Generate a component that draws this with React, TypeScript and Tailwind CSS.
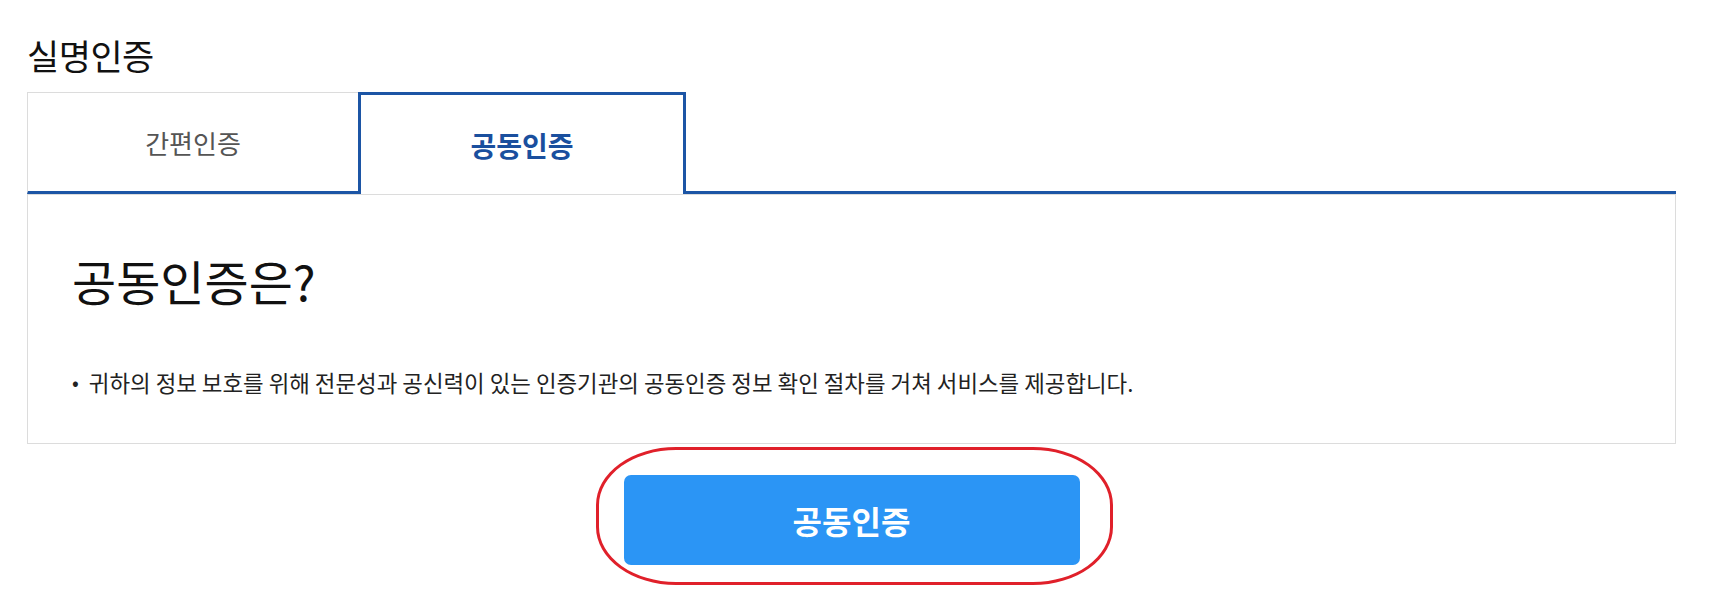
import React from 'react'

const FONT = { fontFamily: '"Noto Sans CJK KR", "Noto Sans", sans-serif' }

export default function App() {
  return (
    <div className="min-h-[603px] bg-white text-[#111]" style={FONT}>
      <div className="pl-[27px] pr-[33px] pt-[32px]">
        <h2 className="text-[35px] font-normal leading-[46px] tracking-[-0.5px]">실명인증</h2>

        <div className="mt-[14px]">
          {/* tabs */}
          <div className="flex h-[102px]">
            <button className="w-[331px] border-l border-t border-[#dcdcdc] border-b-[3px] border-b-[#1c55a5] text-[26px] text-[#555]">
              간편인증
            </button>
            <button className="w-[328px] border-[3px] border-b-0 border-[#1c55a5] text-[28px] font-bold text-[#1a4f9e]">
              공동인증
            </button>
            <div className="flex-1 border-b-[3px] border-[#1c55a5]" />
          </div>

          {/* content */}
          <div className="h-[250px] border border-[#dcdcdc] px-[44px] pt-[52px]">
            <h3 className="text-[48px] font-normal leading-[66px]">공동인증은?</h3>
            <ul className="mt-[54px]">
              <li className="flex items-center gap-[10px] text-[22.4px] leading-[30px] text-[#222]">
                <span className="text-[20px]">•</span>
                <span>
                  귀하의 정보 보호를 위해 전문성과 공신력이 있는 인증기관의 공동인증 정보 확인 절차를 거쳐 서비스를
                  제공합니다.
                </span>
              </li>
            </ul>
          </div>

          {/* action */}
          <div className="flex justify-center pt-[31px]">
            <div className="relative">
              <button className="h-[90px] w-[456px] rounded-[7px] bg-[#2b95f5] text-[32px] font-bold text-white">
                공동인증
              </button>
              <div className="pointer-events-none absolute -left-[28px] -right-[33px] -top-[28px] -bottom-[20px] rounded-[80px/58px] border-[3px] border-[#e0202a]" />
            </div>
          </div>
        </div>
      </div>
    </div>
  )
}
